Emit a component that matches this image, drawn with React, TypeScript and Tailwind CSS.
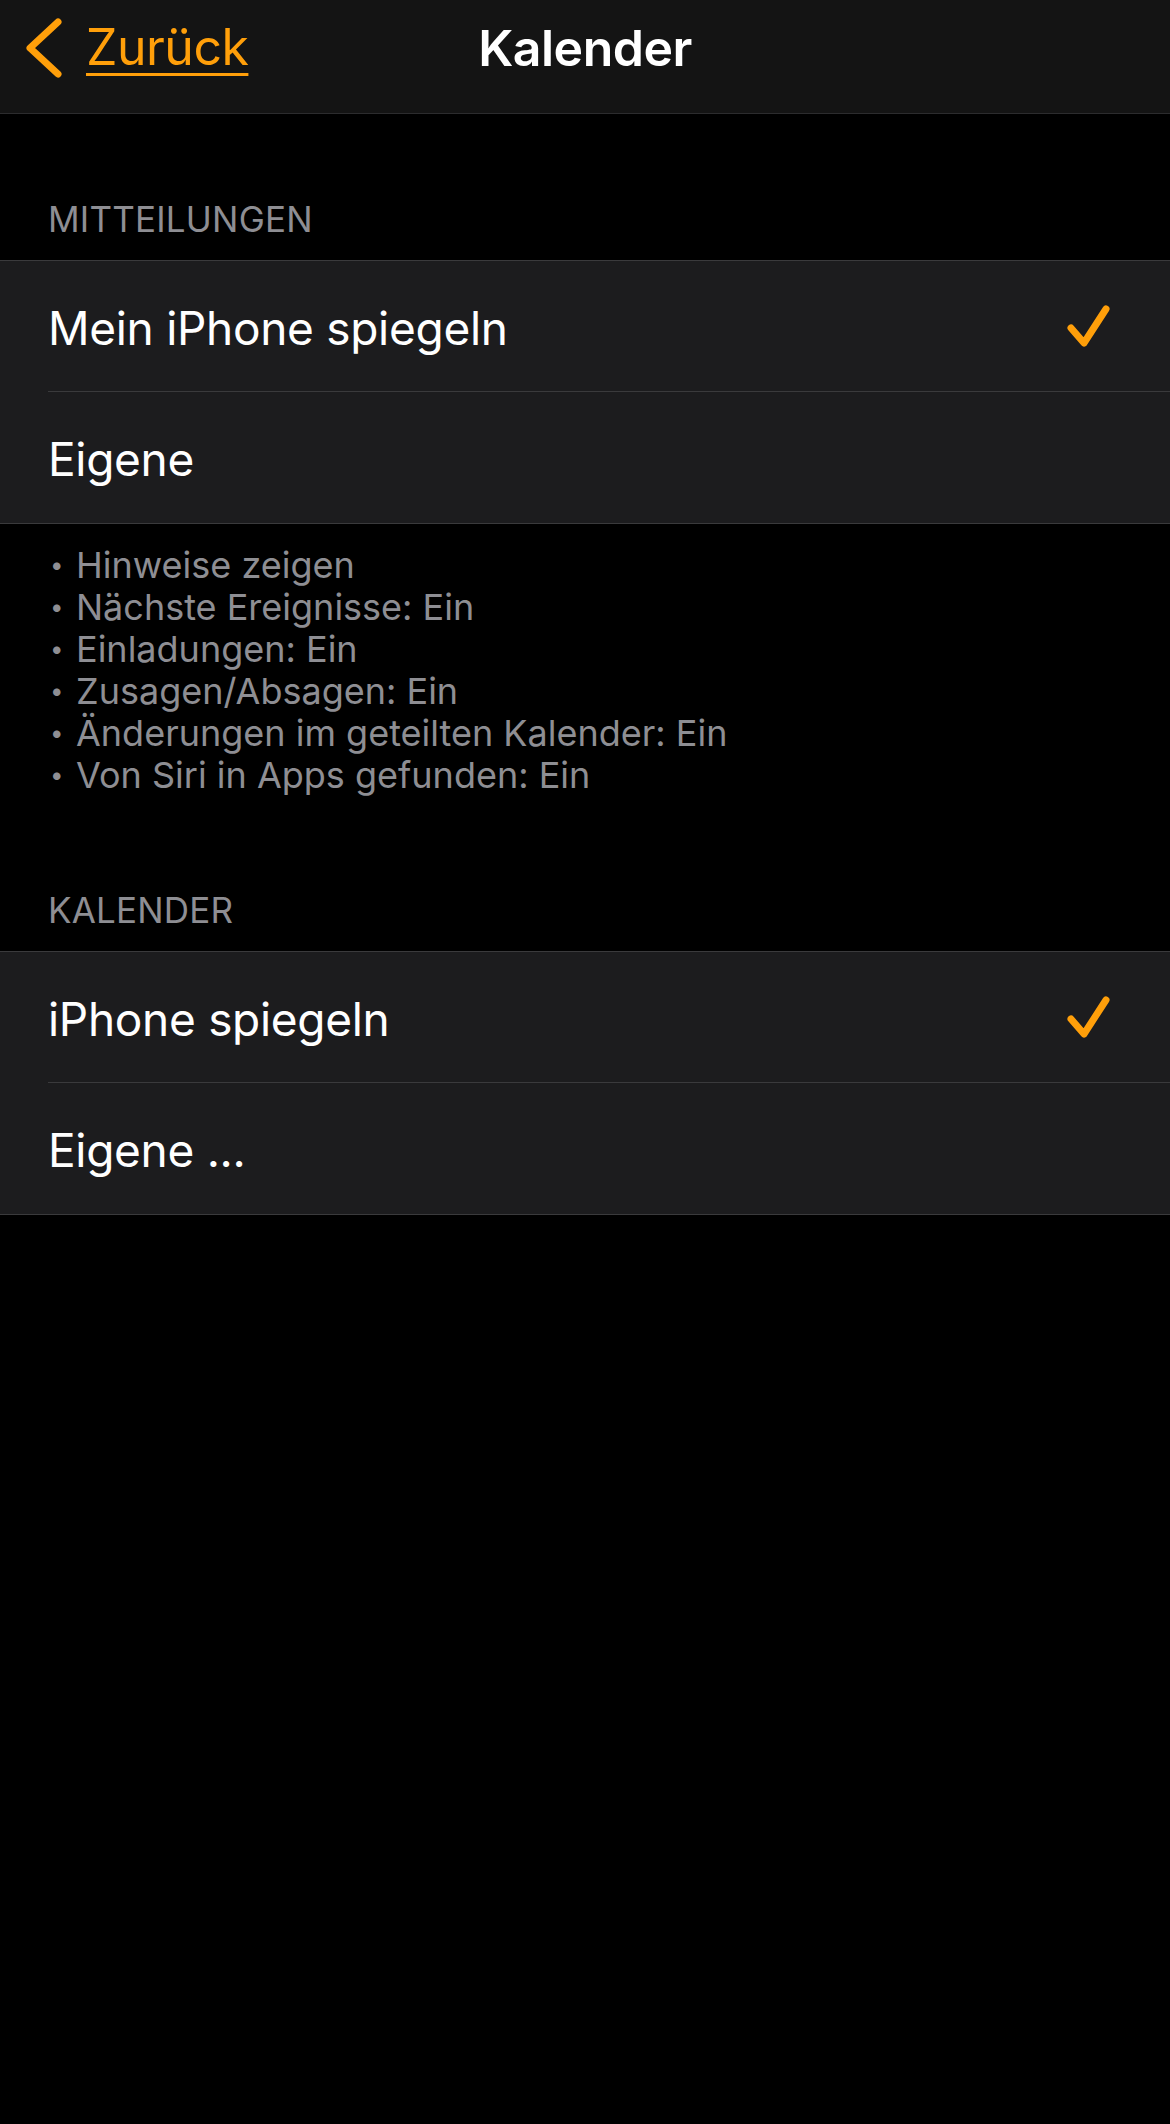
import React from 'react';

const font = { fontFamily: 'Inter, "Noto Sans", sans-serif' };

function Check() {
  return (
    <svg width="48" height="48" viewBox="0 0 48 48" className="shrink-0">
      <path
        d="M5 24 L18 39 L40 5"
        fill="none"
        stroke="#ff9f0a"
        strokeWidth="7"
        strokeLinecap="round"
        strokeLinejoin="round"
      />
    </svg>
  );
}

function Row({ label, checked, last }: { label: string; checked?: boolean; last?: boolean }) {
  return (
    <div className="pl-[48px] bg-[#1c1c1e]">
      <div
        className={`h-[131px] flex items-center justify-between pr-[56px] pt-[4px] ${
          last ? '' : 'border-b border-[#3a3a3c]'
        }`}
      >
        <span className="text-[46px] text-white tracking-[-0.3px]">{label}</span>
        {checked && <Check />}
      </div>
    </div>
  );
}

function SectionHeader({ title, height }: { title: string; height: string }) {
  return (
    <div className={`${height} flex items-end px-[48px] pb-[15px]`}>
      <span className="text-[35px] text-[#8e8e93] uppercase tracking-[0.2px]">{title}</span>
    </div>
  );
}

const notes = [
  'Hinweise zeigen',
  'Nächste Ereignisse: Ein',
  'Einladungen: Ein',
  'Zusagen/Absagen: Ein',
  'Änderungen im geteilten Kalender: Ein',
  'Von Siri in Apps gefunden: Ein',
];

export default function App() {
  return (
    <div className="w-[1170px] min-h-[2124px] bg-black" style={font}>
      {/* Nav bar */}
      <div className="h-[114px] bg-[#141414] border-b border-[#2c2c2e] relative flex items-center pb-[18px]">
        <div className="flex items-center pl-[24px] gap-[22px]">
          <svg width="40" height="60" viewBox="0 0 40 60">
            <path
              d="M34 4 L6 30 L34 56"
              fill="none"
              stroke="#ff9f0a"
              strokeWidth="7"
              strokeLinecap="round"
              strokeLinejoin="round"
            />
          </svg>
          <span className="text-[50px] text-[#ff9f0a] underline underline-offset-[8px] decoration-[3px] tracking-[-0.5px]">
            Zurück
          </span>
        </div>
        <div className="absolute inset-x-0 top-0 h-[96px] flex items-center justify-center pointer-events-none">
          <span className="text-[50px] font-semibold text-white tracking-[-0.5px]">Kalender</span>
        </div>
      </div>

      <SectionHeader title="Mitteilungen" height="h-[146px]" />
      <div className="border-y border-[#3a3a3c]">
        <Row label="Mein iPhone spiegeln" checked />
        <Row label="Eigene" last />
      </div>

      <div className="pl-[50px] pr-[48px] pt-[20px] text-[36px] leading-[42px] text-[#8e8e93]">
        {notes.map((n) => (
          <div key={n} className="flex">
            <span className="w-[26px] text-[24px]">•</span>
            <span>{n}</span>
          </div>
        ))}
      </div>

      <SectionHeader title="Kalender" height="h-[155px]" />
      <div className="border-y border-[#3a3a3c]">
        <Row label="iPhone spiegeln" checked />
        <Row label="Eigene ..." last />
      </div>
    </div>
  );
}
